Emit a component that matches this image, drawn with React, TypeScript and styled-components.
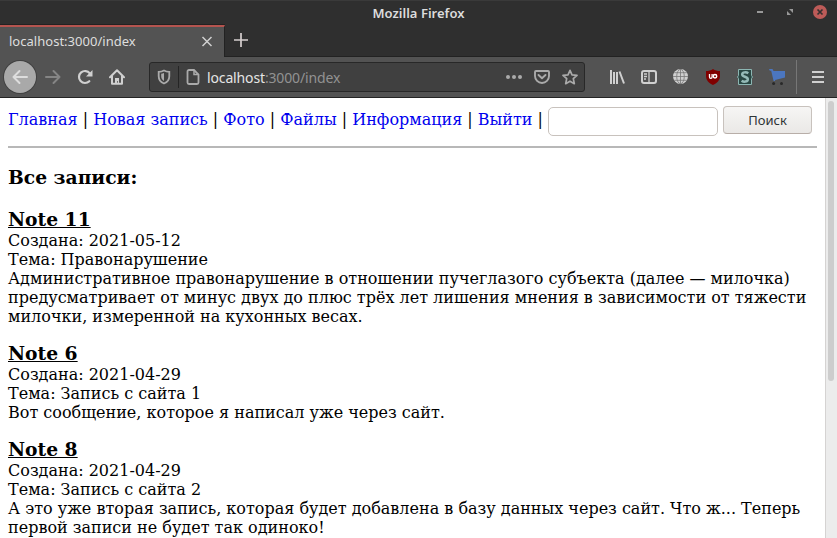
import React from "react";
import styled, { createGlobalStyle, css } from "styled-components";

const GlobalStyle = createGlobalStyle`
  * { box-sizing: border-box; }
  html, body { margin: 0; padding: 0; overflow: hidden; }
  body { background: #fff; }
`;

const Browser = styled.div`
  width: 837px;
  height: 538px;
  display: flex;
  flex-direction: column;
  overflow: hidden;
  font-family: "Noto Sans", sans-serif;
`;

const TitleBar = styled.header`
  height: 25px;
  flex: none;
  display: grid;
  grid-template-columns: 1fr auto 1fr;
  background: #2f2f2f;
  border-top: 1px solid #3a3a3a;
`;

const WindowTitle = styled.div`
  grid-column: 2;
  color: #dcdcdc;
  font-size: 13px;
  font-weight: 600;
  line-height: 24px;
  letter-spacing: 0.02px;
  white-space: nowrap;
`;

const WindowControls = styled.div`
  display: flex;
  justify-content: flex-end;
  padding: 4px 10px 0 0;
  gap: 16px;
`;

const TabStrip = styled.div`
  height: 32px;
  flex: none;
  display: flex;
  background: #2f2f2f;
  border-bottom: 1px solid #222;
`;

const Tab = styled.div`
  width: 225px;
  height: 32px;
  display: flex;
  align-items: center;
  justify-content: space-between;
  padding: 0 11px 1px 9px;
  background: #535353;
  border-top: 2px solid #b5544f;
  border-right: 1px solid #222;
  box-shadow: 0 -1px #222;
`;

const TabTitle = styled.span`
  color: #dedede;
  font-size: 13px;
  line-height: 18px;
  letter-spacing: 0.02px;
  padding-bottom: 2px;
`;

const NewTab = styled.div`
  padding: 8px 0 0 9px;
`;

const Toolbar = styled.div`
  height: 41px;
  flex: none;
  display: flex;
  align-items: center;
  background: #535353;
  border-bottom: 1px solid #242424;
`;

const Navigation = styled.div`
  width: 149px;
  display: flex;
  align-items: center;
  padding-left: 4px;
`;

const BackButton = styled.div`
  width: 32px;
  height: 32px;
  display: grid;
  place-items: center;
  border-radius: 50%;
  background: #a9a9a9;
  box-shadow: 0 0 0 1px #414141;
  margin-right: 9px;
`;

const AddressBar = styled.div`
  width: 436px;
  height: 30px;
  display: flex;
  align-items: center;
  background: #404040;
  border: 1px solid #282828;
  border-radius: 3px;
  padding: 0 6px;
`;

const AddressDivider = styled.span`
  width: 1px;
  height: 22px;
  margin: 0 6px 0 6px;
  background: #252525;
`;

const Address = styled.span`
  flex: 1;
  color: #929292;
  font-size: 14px;
  line-height: 20px;
  letter-spacing: -0.14px;
  padding: 2px 0 0 6px;
  b { color: #e5e5e5; font-weight: 400; }
`;

const AddressActions = styled.div`
  display: flex;
  gap: 12px;
`;

const Extensions = styled.div`
  display: flex;
  align-items: center;
  gap: 16px;
  padding-left: 24px;
`;

const MenuArea = styled.div`
  height: 34px;
  display: flex;
  align-items: center;
  margin-left: 11px;
  padding-left: 13px;
  border-left: 1px solid #777;
`;

const Icon = styled.svg<{ $size?: number; $gap?: number; $color?: string }>`
  display: block;
  flex: none;
  width: ${(p) => p.$size ?? 16}px;
  height: ${(p) => p.$size ?? 16}px;
  margin-right: ${(p) => p.$gap ?? 0}px;
  color: ${(p) => p.$color ?? "#d0d0d0"};
  fill: none;
  stroke: currentColor;
  stroke-width: 2;
`;

const Viewport = styled.div`
  flex: 1;
  min-height: 0;
  display: flex;
`;

const Page = styled.main`
  width: 825px;
  padding: 8px;
  background: #fff;
  color: #000;
  font: 16px/19px "DejaVu Serif", serif;
  overflow: hidden;
`;

const SiteNav = styled.nav`
  height: 40px;
  display: flex;
`;

const NavLinks = styled.div`
  width: 540px;
  padding-top: 4px;
  white-space: nowrap;
`;

const NavLink = styled.a`
  color: #0000ee;
  text-decoration: none;
`;

const controlBorder = css`
  border: 1px solid #c8c2bd;
  border-radius: 4px;
`;

const SearchInput = styled.input`
  ${controlBorder}
  width: 170px;
  height: 29px;
  margin: 1px 5px 0 0;
  background: #fff;
  border-radius: 5px;
`;

const SearchButton = styled.button`
  ${controlBorder}
  width: 89px;
  height: 28px;
  padding: 0;
  border-bottom-color: #b8aea8;
  background: linear-gradient(#f6f5f4, #eae8e6);
  color: #2e3436;
  font: 13px "Noto Sans", sans-serif;
`;

const Rule = styled.hr`
  height: 2px;
  margin: 0;
  border: 0;
  background: #b8b8b8;
`;

const PageTitle = styled.h3`
  margin: 18px 0 20px;
  font-size: 18.72px;
  line-height: 22px;
`;

const Note = styled.article`
  margin-bottom: 16px;
  white-space: nowrap;
`;

const NoteTitle = styled.h3`
  margin: 0 0 1px;
  font-size: 18.72px;
  line-height: 22px;
  text-decoration: underline;
`;

const Line = styled.div``;

const ScrollTrack = styled.div`
  width: 12px;
  padding: 3px 2px 0;
  background: #ececec;
  border-left: 1px solid #d5d3d2;
`;

const ScrollThumb = styled.div`
  width: 6px;
  height: 280px;
  border-radius: 3px;
  background: #cdcdcd;
`;

const links = ["Главная", "Новая запись", "Фото", "Файлы", "Информация", "Выйти"];

const notes = [
  {
    title: "Note 11",
    date: "2021-05-12",
    topic: "Правонарушение",
    lines: [
      "Административное правонарушение в отношении пучеглазого субъекта (далее — милочка)",
      "предусматривает от минус двух до плюс трёх лет лишения мнения в зависимости от тяжести",
      "милочки, измеренной на кухонных весах.",
    ],
  },
  {
    title: "Note 6",
    date: "2021-04-29",
    topic: "Запись с сайта 1",
    lines: ["Вот сообщение, которое я написал уже через сайт."],
  },
  {
    title: "Note 8",
    date: "2021-04-29",
    topic: "Запись с сайта 2",
    lines: [
      "А это уже вторая запись, которая будет добавлена в базу данных через сайт. Что ж... Теперь",
      "первой записи не будет так одиноко!",
    ],
  },
];

export default function App() {
  return (
    <Browser>
      <GlobalStyle />
      <TitleBar>
        <WindowTitle>Mozilla Firefox</WindowTitle>
        <WindowControls>
          <Icon $size={14} viewBox="0 0 14 14" $color="#999">
            <path d="M4 7h6" />
          </Icon>
          <Icon $size={14} viewBox="0 0 14 14" $color="#999">
            <path d="M6 4h4v4zM4 6v4h4z" fill="currentColor" stroke="none" />
          </Icon>
          <Icon $size={14} viewBox="0 0 14 14">
            <circle cx="7" cy="7" r="7" fill="#bd5b58" stroke="none" />
            <path d="m4.5 4.5 5 5m0-5-5 5" stroke="#343030" strokeWidth="1.7" />
          </Icon>
        </WindowControls>
      </TitleBar>

      <TabStrip>
        <Tab>
          <TabTitle>localhost:3000/index</TabTitle>
          <Icon $size={12} viewBox="0 0 12 12">
            <path d="m1.5 1 9 9m0-9-9 9" strokeWidth="1.5" />
          </Icon>
        </Tab>
        <NewTab>
          <Icon $size={14} viewBox="0 0 14 14" $color="#d6cfcf">
            <path d="M7 0v14M0 7h14" strokeWidth="1.7" />
          </Icon>
        </NewTab>
      </TabStrip>

      <Toolbar>
        <Navigation>
          <BackButton>
            <Icon viewBox="0 0 16 16" $color="#ddd">
              <path d="M15 8H1.5M7.5 2 1.5 8l6 6" strokeLinecap="round" strokeLinejoin="round" />
            </Icon>
          </BackButton>
          <Icon viewBox="0 0 16 16" $color="#858585" $gap={16}>
            <path d="M1 8h13.5M8.5 2l6 6-6 6" strokeLinecap="round" strokeLinejoin="round" />
          </Icon>
          <Icon viewBox="0 0 16 16" $gap={16}>
            <path d="M12.3 12.2A6 6 0 1 1 12.8 4.4" strokeWidth="2.2" strokeLinecap="round" />
            <path d="M15.5 1v6.5H9z" fill="currentColor" stroke="none" />
          </Icon>
          <Icon viewBox="0 0 16 16">
            <path d="M1 8.2 8 1.3l7 6.9M3 7v7.8h10V7" strokeLinecap="round" strokeLinejoin="round" />
            <path d="M6 14V9h4v5H8.8v-2H8v2z" fill="currentColor" stroke="none" />
          </Icon>
        </Navigation>
        <AddressBar>
          <Icon viewBox="0 0 16 16" $color="#aaa">
            <path d="M8 1.5c1.8 1 3.5 1.3 5.3 1.3v4.5c0 3.6-2 6-5.3 7.2-3.3-1.2-5.3-3.6-5.3-7.2V2.8C4.5 2.8 6.2 2.5 8 1.5z" strokeWidth="1.8" />
            <path d="M8 4c-.9.5-1.8.7-2.8.8v2.5c0 2.3 1 3.7 2.8 4.7z" fill="currentColor" stroke="none" />
          </Icon>
          <AddressDivider />
          <Icon viewBox="0 0 16 16" $color="#aaa">
            <path d="M9 1H4a1.5 1.5 0 0 0-1.5 1.5v11A1.5 1.5 0 0 0 4 15h8a1.5 1.5 0 0 0 1.5-1.5v-8z" strokeWidth="1.8" />
            <path d="M9 1v4.5h4.5" strokeWidth="1.5" />
          </Icon>
          <Address><b>localhost</b>:3000/index</Address>
          <AddressActions>
            <Icon viewBox="0 0 16 16" $color="#aaa">
              <g fill="currentColor" stroke="none"><circle cx="2" cy="8" r="2" /><circle cx="8" cy="8" r="2" /><circle cx="14" cy="8" r="2" /></g>
            </Icon>
            <Icon viewBox="0 0 16 16" $color="#aaa">
              <path d="M2 2h12a1 1 0 0 1 1 1v4a7 7 0 0 1-14 0V3a1 1 0 0 1 1-1zM4.5 6 8 9.3 11.5 6" strokeLinecap="round" strokeLinejoin="round" strokeWidth="1.9" />
            </Icon>
            <Icon viewBox="0 0 16 16" $color="#aaa">
              <path d="m8 1.3 2 4.5 5 .5-3.7 3.4 1 5L8 12.2l-4.3 2.5 1-5L1 6.3l5-.5z" strokeLinejoin="round" strokeWidth="1.7" />
            </Icon>
          </AddressActions>
        </AddressBar>
        <Extensions>
          <Icon viewBox="0 0 16 16">
            <path d="M2 1v14M5 3v12M8 3v12M10.5 2.5l4.5 12" />
          </Icon>
          <Icon viewBox="0 0 16 16">
            <rect x="1" y="2" width="14" height="12" rx="2" />
            <path d="M8 2v12M3 5h3M3 7.5h3M3 10h2" strokeWidth="1.3" />
          </Icon>
          <Icon viewBox="0 0 16 16">
            <circle cx="7.5" cy="7.5" r="7.5" fill="#d0d0d0" stroke="none" />
            <path d="M7.5 0v15M0 7.5h15M1.5 3.7h12M1.5 11.3h12" stroke="#777" strokeWidth=".8" />
            <ellipse cx="7.5" cy="7.5" rx="3.8" ry="7.2" stroke="#777" strokeWidth=".8" />
          </Icon>
          <Icon viewBox="0 0 16 16">
            <path d="M8 0c2 1.4 4.4 2 7 2v5c0 4.5-3 7.2-7 9-4-1.8-7-4.5-7-9V2c2.6 0 5-.6 7-2z" fill="#800000" stroke="none" />
            <path d="M4.5 5v3a1.3 1.3 0 0 0 2.6 0V5" stroke="#fff" strokeWidth="1.3" />
            <circle cx="10" cy="7.2" r="1.7" stroke="#fff" strokeWidth="1.5" />
          </Icon>
          <Icon viewBox="0 0 16 16">
            <path d="M1.5.5h13v6l1 1.5-1 1.5v6h-13v-6L.5 8l1-1.5z" fill="#294743" stroke="#8cb6b3" strokeWidth="1" />
            <path d="M11.3 4.2C9.5 3 5.2 2.8 5.2 5.4c0 2.7 5.6 2 5.6 4.9 0 2.9-4.3 2.8-6.2 1.4" stroke="#95bab7" strokeWidth="2.5" />
          </Icon>
          <Icon viewBox="0 0 16 16">
            <path d="M0 0h3.5l1 2H16v6.5L6 11l.2 1H4.6L2.2 1.8H.8z" fill="#4b76bf" stroke="none" />
            <circle cx="4.6" cy="14.5" r="1.5" fill="#292929" stroke="none" />
            <circle cx="12.5" cy="14.5" r="1.5" fill="#292929" stroke="none" />
          </Icon>
        </Extensions>
        <MenuArea>
          <Icon viewBox="0 0 16 16">
            <path d="M2 3h12M2 8h12M2 13h12" />
          </Icon>
        </MenuArea>
      </Toolbar>

      <Viewport>
        <Page>
          <SiteNav>
            <NavLinks>
              {links.map((label) => (
                <React.Fragment key={label}>
                  <NavLink>{label}</NavLink>{" | "}
                </React.Fragment>
              ))}
            </NavLinks>
            <SearchInput />
            <SearchButton>Поиск</SearchButton>
          </SiteNav>
          <Rule />
          <PageTitle>Все записи:</PageTitle>
          {notes.map((note) => (
            <Note key={note.title}>
              <NoteTitle>{note.title}</NoteTitle>
              <Line>Создана: {note.date}</Line>
              <Line>Тема: {note.topic}</Line>
              {note.lines.map((line) => <Line key={line}>{line}</Line>)}
            </Note>
          ))}
        </Page>
        <ScrollTrack><ScrollThumb /></ScrollTrack>
      </Viewport>
    </Browser>
  );
}
